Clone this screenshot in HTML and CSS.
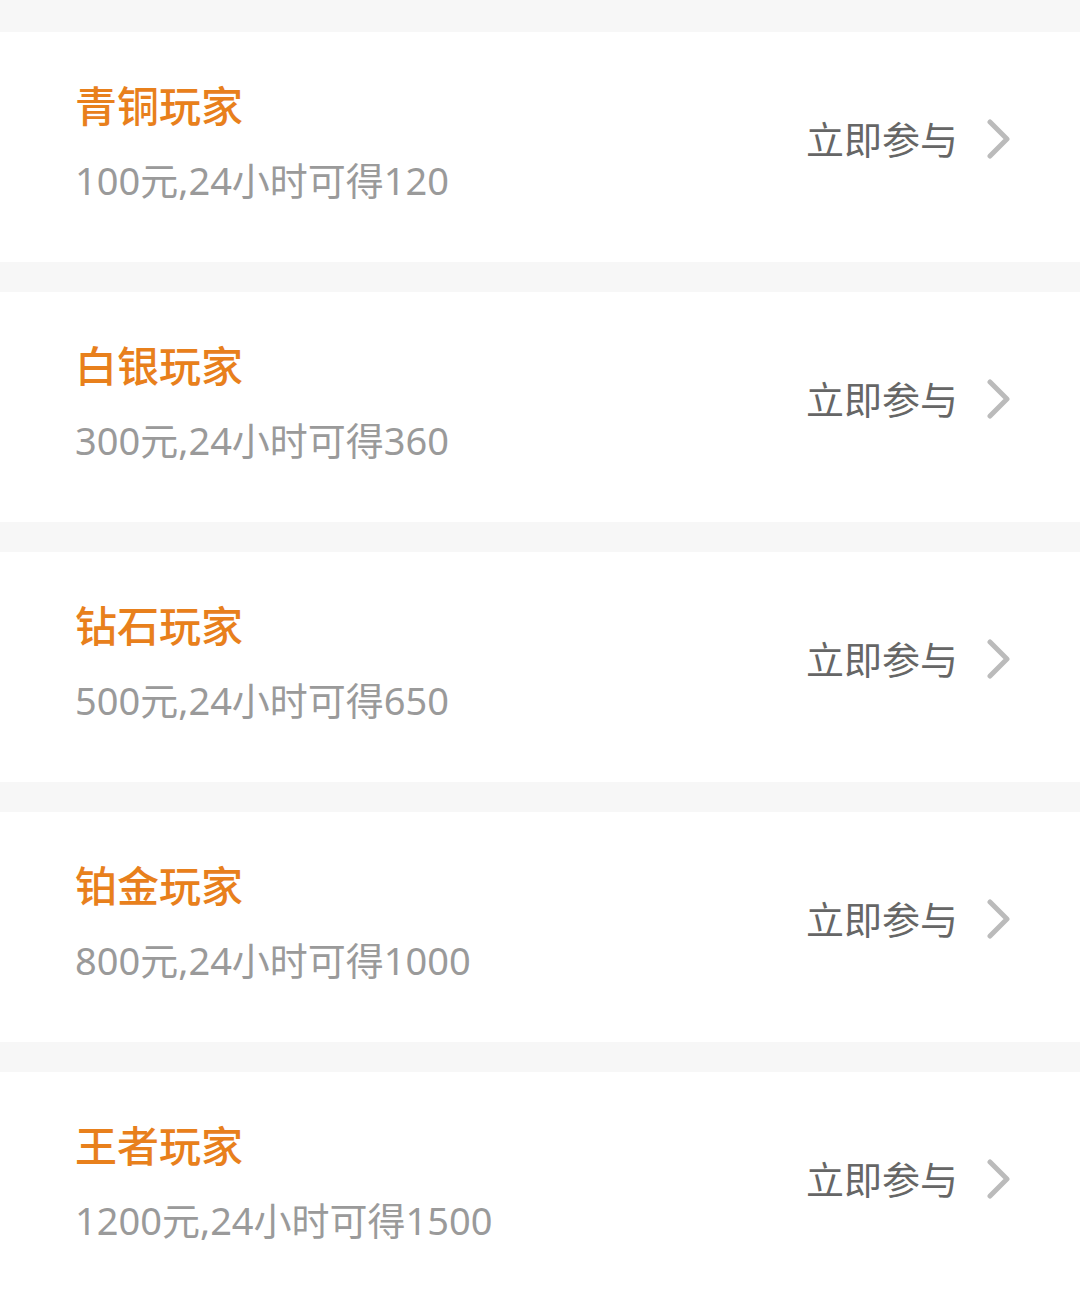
FILE: index.html
```html
<!DOCTYPE html>
<html lang="zh-CN">
<head>
  <meta charset="UTF-8">
  <meta name="viewport" content="width=device-width, initial-scale=1.0">
  <title>玩家等级</title>
  <link rel="stylesheet" href="styles.css">
</head>
<body>

<div class="list">
  <div class="card">
    <div class="info">
      <div class="title">青铜玩家</div>
      <div class="desc">100元,24小时可得120</div>
    </div>
    <div class="action">立即参与
      <svg class="arrow" viewBox="0 0 24 40"><path d="M4 3 L21 20 L4 37"/></svg>
    </div>
  </div>

  <div class="card">
    <div class="info">
      <div class="title">白银玩家</div>
      <div class="desc">300元,24小时可得360</div>
    </div>
    <div class="action">立即参与
      <svg class="arrow" viewBox="0 0 24 40"><path d="M4 3 L21 20 L4 37"/></svg>
    </div>
  </div>

  <div class="card">
    <div class="info">
      <div class="title">钻石玩家</div>
      <div class="desc">500元,24小时可得650</div>
    </div>
    <div class="action">立即参与
      <svg class="arrow" viewBox="0 0 24 40"><path d="M4 3 L21 20 L4 37"/></svg>
    </div>
  </div>

  <div class="card">
    <div class="info">
      <div class="title">铂金玩家</div>
      <div class="desc">800元,24小时可得1000</div>
    </div>
    <div class="action">立即参与
      <svg class="arrow" viewBox="0 0 24 40"><path d="M4 3 L21 20 L4 37"/></svg>
    </div>
  </div>

  <div class="card">
    <div class="info">
      <div class="title">王者玩家</div>
      <div class="desc">1200元,24小时可得1500</div>
    </div>
    <div class="action">立即参与
      <svg class="arrow" viewBox="0 0 24 40"><path d="M4 3 L21 20 L4 37"/></svg>
    </div>
  </div>
</div>

</body>
</html>
```

FILE: styles.css
```css
body {
  margin: 0;
  background-color: #f7f7f7;
  font-family: "Noto Sans", "Noto Sans CJK SC", sans-serif;
}
.list {
  display: flex;
  flex-direction: column;
  gap: 30px;
  padding-top: 32px;
}
.card {
  display: flex;
  justify-content: space-between;
  align-items: flex-start;
  height: 230px;
  box-sizing: border-box;
  padding: 48px 70px 0 75px;
  background-color: #fff;
}
.title {
  font-size: 42px;
  line-height: 52px;
  font-weight: 500;
  color: #e8801c;
}
.desc {
  margin-top: 24px;
  font-size: 38px;
  line-height: 48px;
  color: #9a9a9a;
}
.action {
  display: flex;
  align-items: center;
  margin-top: 35px;
  font-size: 38px;
  line-height: 48px;
  color: #666;
}
.arrow {
  width: 24px;
  height: 40px;
  margin-left: 28px;
  fill: none;
  stroke: #bbb;
  stroke-width: 5;
  stroke-linecap: round;
  stroke-linejoin: round;
}
```
